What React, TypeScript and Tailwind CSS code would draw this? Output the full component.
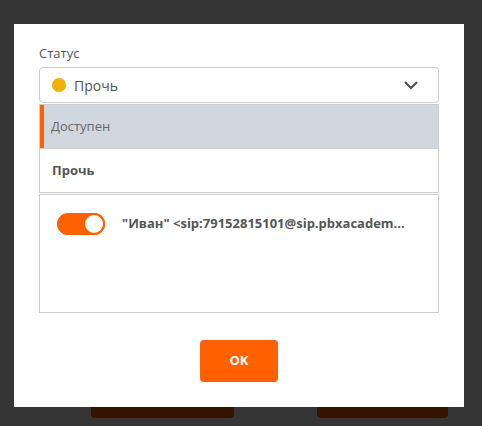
export default function App() {
  return (
    <div
      className="relative w-[482px] h-[426px] bg-[#353535] overflow-hidden"
      style={{ fontFamily: '"Open Sans", "Noto Sans", sans-serif' }}
    >
      {/* page content behind the modal */}
      <div className="flex pt-[380px]">
        <div className="ml-[91px] w-[143px] h-[38px] rounded-b-[4px] bg-[#341400]" />
        <div className="ml-[83px] w-[131px] h-[38px] rounded-b-[4px] bg-[#341400]" />
      </div>

      <div className="absolute left-[14px] top-[24px] w-[450px] h-[383px] bg-white px-[25px] pt-[20px]">
        <label className="block text-[13px] leading-[18px] text-[#555]">Статус</label>

        <div className="mt-[5px] h-[36px] flex items-center rounded-[4px] border border-[#ccc] pl-[12px] pr-[20px]">
          <span className="w-[14px] h-[14px] rounded-full bg-[#f2b000]" />
          <span className="ml-[8px] text-[14px] text-[#555]">Прочь</span>
          <svg className="ml-auto" width="14" height="9" viewBox="0 0 14 9" fill="none">
            <path d="M1.5 1.5L7 7l5.5-5.5" stroke="#4a4f55" strokeWidth="2" strokeLinecap="round" />
          </svg>
        </div>

        <div className="mt-[1px] border border-[#ccc]">
          <div className="h-[43px] flex items-center bg-[#d1d7de] border-l-[4px] border-[#ff6000] pl-[7px] text-[13px] text-[#666]">
            Доступен
          </div>
          <div className="h-[44px] flex items-center border-t border-[#ccc] pl-[12px] text-[13px] font-bold text-[#555]">
            Прочь
          </div>
        </div>

        <div className="mt-[1px] h-[119px] border border-[#ccc] pl-[17px] pt-[18px]">
          <div className="flex items-center">
            <div className="w-[48px] h-[22px] rounded-full bg-[#ff6000] flex justify-end">
              <div className="w-[22px] h-[22px] rounded-full bg-white border-2 border-[#ff6000]" />
            </div>
            <span className="ml-[17px] text-[13px] font-bold text-[#555] whitespace-nowrap">
              "Иван" &lt;sip:79152815101@sip.pbxacadem...
            </span>
          </div>
        </div>

        <div className="flex justify-center mt-[27px]">
          <button className="w-[78px] h-[42px] rounded-[4px] bg-[#ff6000] text-white text-[13px] font-bold">
            OK
          </button>
        </div>
      </div>
    </div>
  );
}
